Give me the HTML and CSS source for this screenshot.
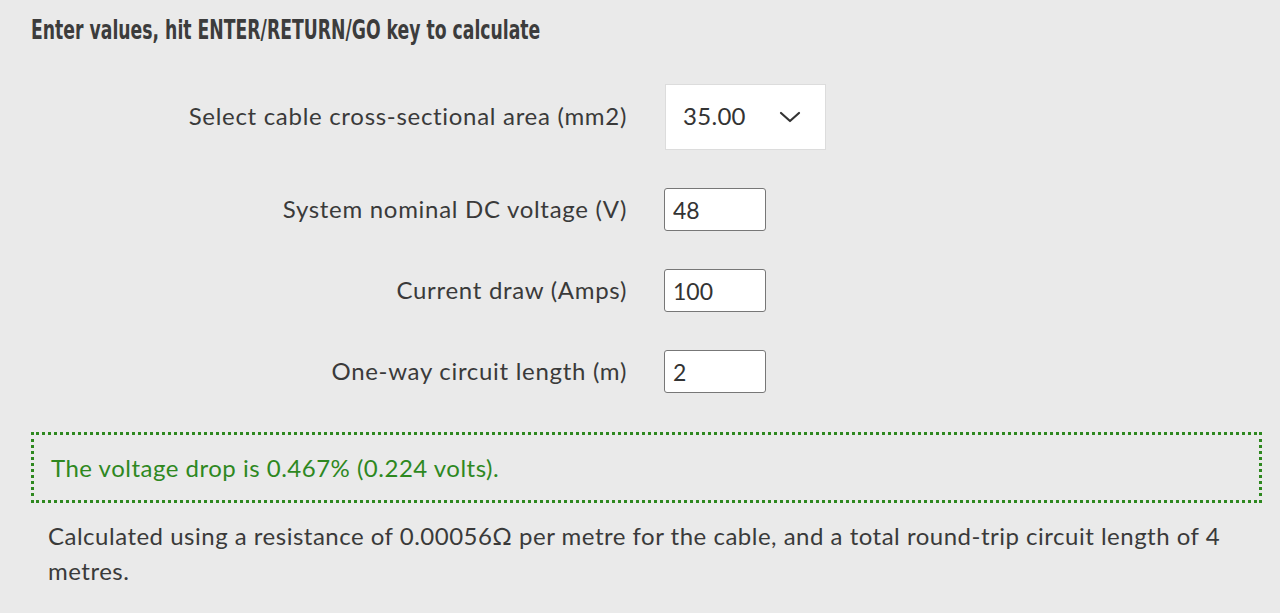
FILE: index.html
```html
<!DOCTYPE html>
<html>
	<head>
		<meta charset="utf-8">
		<title>Voltage drop calculator</title>
		<link rel="stylesheet" href="styles.css">
	</head>
	<body>
		<div class="page">
			<h2 class="title"><span class="title-text">Enter values, hit ENTER/RETURN/GO key to calculate</span></h2>
			<form class="calc" onsubmit="return false">
				<label class="label" for="area">Select cable cross-sectional area (mm2)</label>
				<div class="select-box" id="area">
					<span class="select-value">35.00</span>
					<svg class="chevron" width="22" height="14" viewBox="0 0 22 14"><path d="M2 3 L11 11 L20 3" fill="none" stroke="#333" stroke-width="2.2" stroke-linecap="round" stroke-linejoin="round"/></svg>
				</div>
				<label class="label" for="volts">System nominal DC voltage (V)</label>
				<input class="field" id="volts" type="text" value="48">
				<label class="label" for="amps">Current draw (Amps)</label>
				<input class="field" id="amps" type="text" value="100">
				<label class="label" for="len">One-way circuit length (m)</label>
				<input class="field" id="len" type="text" value="2">
			</form>
			<div class="result">The voltage drop is 0.467% (0.224 volts).</div>
			<p class="note">Calculated using a resistance of 0.00056&#8486; per metre for the cable, and a total round-trip circuit length of 4 metres.</p>
		</div>
	</body>
</html>
```

FILE: styles.css
```css
body
{
	margin: 0;
	background-color: #eaeaea;
	font-family: "Lato", "Noto Sans", sans-serif;
	color: #3a3a3a;
}
.page
{
	padding: 0 18px 0 31px;
}
.title
{
	margin: 0;
	padding-top: 14px;
	font-family: "DejaVu Sans Condensed", "DejaVu Sans", sans-serif;
	font-weight: bold;
	font-size: 27px;
	line-height: 32px;
	color: #3c3c3c;
	white-space: nowrap;
}
.title-text
{
	display: inline-block;
	transform: scaleX(0.71);
	transform-origin: left center;
}
.calc
{
	display: grid;
	grid-template-columns: 596px 1fr;
	column-gap: 37px;
	row-gap: 38px;
	align-items: center;
	margin-top: 38px;
}
.label
{
	padding-bottom: 3px;
	text-align: right;
	font-size: 24px;
	letter-spacing: 0.7px;
}
.select-box
{
	display: flex;
	align-items: center;
	justify-content: space-between;
	box-sizing: border-box;
	width: 161px;
	height: 66px;
	margin-left: 1px;
	padding: 0 24px 3px 17px;
	background-color: #fff;
	border: 1px solid #dcdcdc;
	font-size: 24px;
	letter-spacing: 0.3px;
	color: #333;
}
.chevron
{
	margin-top: 3px;
}
.field
{
	box-sizing: border-box;
	width: 102px;
	height: 43px;
	padding: 0 8px;
	background-color: #fff;
	border: 1px solid #777;
	border-radius: 3px;
	font-family: "Lato", "Noto Sans", sans-serif;
	font-size: 23px;
	color: #333;
}
.result
{
	margin-top: 39px;
	padding: 0 17px;
	height: 65px;
	line-height: 65px;
	border: 3px dotted #2e881f;
	font-size: 24px;
	letter-spacing: 0.5px;
	color: #2e881f;
}
.note
{
	margin: 15px 0 0 0;
	padding: 0 17px;
	font-size: 24px;
	line-height: 35px;
	letter-spacing: 0.5px;
}
```
